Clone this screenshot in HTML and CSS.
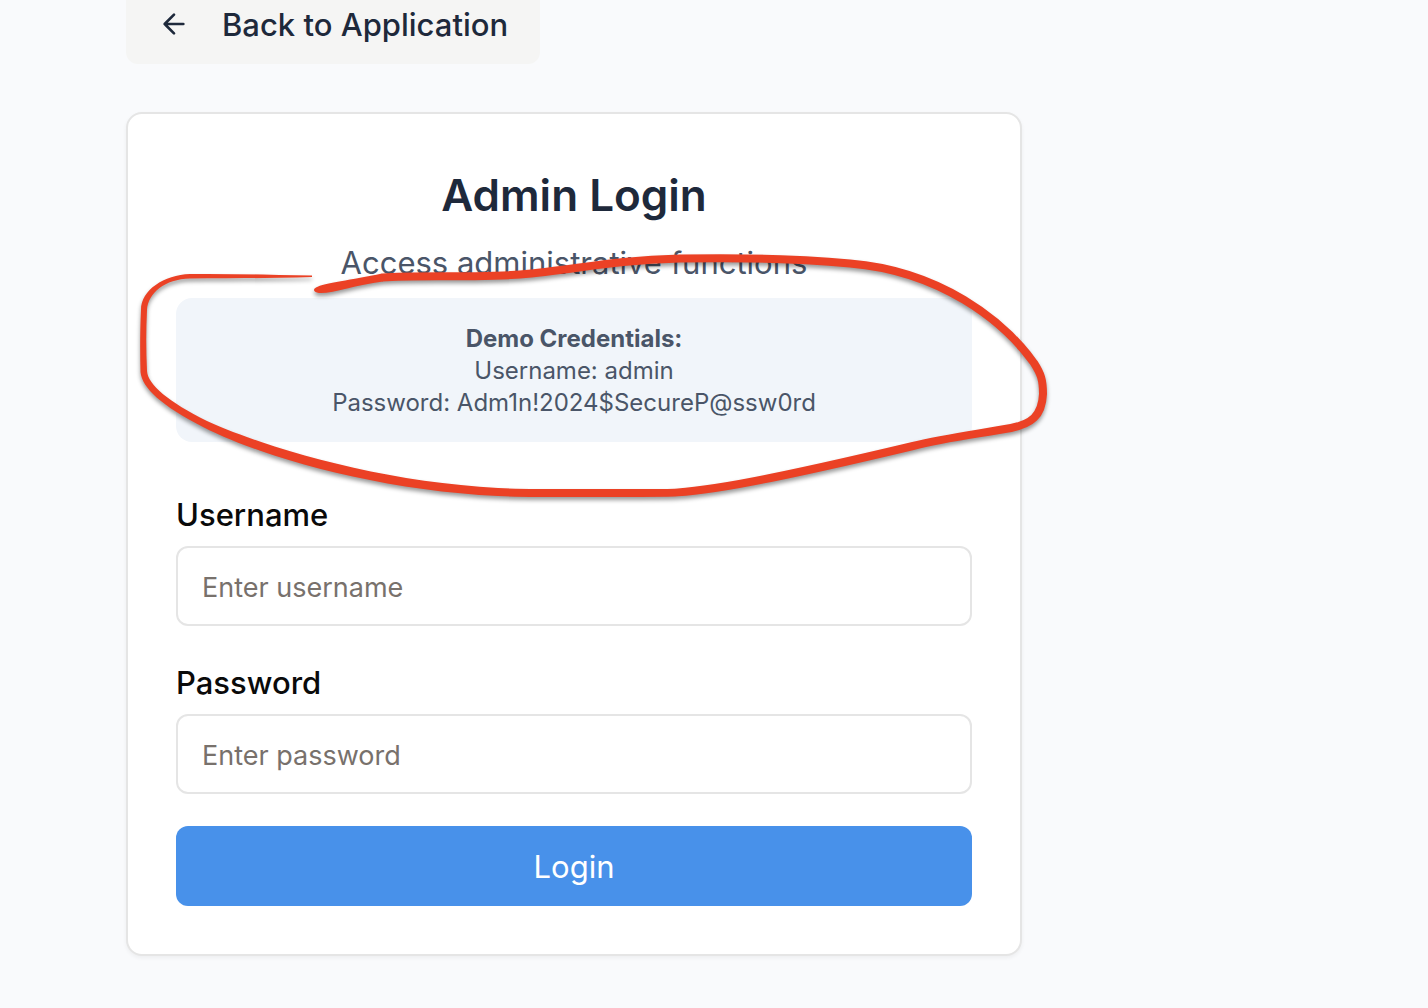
FILE: index.html
```html
<!DOCTYPE html>
<html lang="en">
<head>
  <meta charset="utf-8">
  <meta name="viewport" content="width=device-width, initial-scale=1">
  <title>Admin Login</title>
  <link rel="stylesheet" href="styles.css">
</head>
<body>
  <main class="page">
    <a class="back" href="#">
      <svg class="back-icon" viewBox="0 0 24 24" aria-hidden="true"><path d="m12 19-7-7 7-7M19 12H5"/></svg>
      Back to Application
    </a>
    <section class="card">
      <header class="card-header">
        <h1 class="title">Admin Login</h1>
        <p class="subtitle">Access administrative functions</p>
        <div class="demo">
          <strong>Demo Credentials:</strong>
          <span>Username: admin</span>
          <span>Password: Adm1n!2024$SecureP@ssw0rd</span>
        </div>
      </header>
      <form class="form">
        <div class="field">
          <label class="label" for="username">Username</label>
          <input class="input" id="username" type="text" placeholder="Enter username">
        </div>
        <div class="field">
          <label class="label" for="password">Password</label>
          <input class="input" id="password" type="password" placeholder="Enter password">
        </div>
        <button class="submit" type="button">Login</button>
      </form>
    </section>
    <svg class="marker" viewBox="0 0 1060 510" aria-hidden="true">
      <path class="marker-line" d="M382 277.500C420 275 470 278 520 274.500C575 270 610 260 680 258.500C740 257.500 800 258.500 850 263.500C940 271 1003 320 1034 363C1041 374 1043 380 1043 394C1042 416 1031 424 1011 428C978 434 945 438 913 446C850 461 770 480 715 488C683 493 673 493 640 493L530 493"/>
      <path class="marker-fill" d="M316 287.500C324 283 352 280 382 273.500L383 281.500C355 285 332 294 319 293C313 292 313 289 316 287.500Z"/>
      <path class="marker-fill" d="M312 275.500C270 275 230 273.500 190 274C164 275 141 290 141 310C140 332 140 352 140.500 372C142 388 162 406 203 427C270 461 400 496 530 497L530 489C405 488 278 453 207 421C169 402 148 385 147 371C146 350 146 330 147 310C148 293 165 279 190 278.500C230 278 275 278.500 312 277Z"/>
    </svg>
  </main>
</body>
</html>
```
FILE: styles.css
```css
* {
  box-sizing: border-box;
}

body {
  margin: 0;
  background: #f9fafc;
  color: #1e293b;
  font-family: Inter, "Liberation Sans", sans-serif;
}

.page {
  position: relative;
  display: flex;
  flex-direction: column;
  align-items: flex-start;
  gap: 48px;
  max-width: 1148px;
  padding: 0 126px 52px;
}

.back {
  display: flex;
  align-items: center;
  gap: 32px;
  height: 80px;
  margin-top: -16px;
  padding: 0 32px;
  border-radius: 12px;
  background: #f5f5f4;
  color: #1e293b;
  font-size: 31px;
  font-weight: 500;
  text-decoration: none;
  white-space: nowrap;
}

.back-icon {
  width: 32px;
  height: 32px;
  fill: none;
  stroke: currentColor;
  stroke-width: 2;
  stroke-linecap: round;
  stroke-linejoin: round;
}

.card {
  width: 100%;
  padding: 48px;
  border: 2px solid #e5e5e5;
  border-radius: 16px;
  background: #fff;
  box-shadow: 0 2px 4px rgba(0, 0, 0, 0.05);
}

.card-header {
  text-align: center;
}

.title {
  margin: 0 0 8px;
  font-size: 44px;
  font-weight: 600;
  line-height: 66px;
}

.subtitle {
  margin: 0 0 8px;
  color: #4a5568;
  font-size: 31px;
  line-height: 54px;
}

.demo {
  display: flex;
  flex-direction: column;
  padding: 25px 24px 23px;
  border-radius: 16px;
  background: #f1f5fa;
  color: #4a5568;
  font-size: 24px;
  line-height: 32px;
}

.form {
  display: flex;
  flex-direction: column;
  gap: 32px;
  margin-top: 48px;
}

.field {
  display: flex;
  flex-direction: column;
  gap: 6px;
}

.label {
  color: #0a0a0a;
  font-size: 31px;
  font-weight: 500;
  line-height: 50px;
}

.input {
  width: 100%;
  height: 80px;
  padding: 2px 24px 0;
  border: 2px solid #e5e5e5;
  border-radius: 12px;
  background: #fff;
  color: #0a0a0a;
  font: inherit;
  font-size: 27px;
}

.input::placeholder {
  color: #78716c;
  opacity: 1;
}

.submit {
  height: 80px;
  border: 0;
  border-radius: 12px;
  background: #4891ea;
  color: #fff;
  font: inherit;
  font-size: 31px;
}

.marker {
  position: absolute;
  top: 0;
  left: 0;
  width: 1060px;
  height: 510px;
  pointer-events: none;
  filter: drop-shadow(0 3px 2px rgba(0, 0, 0, 0.4));
}

.marker-line {
  fill: none;
  stroke: #eb4125;
  stroke-width: 8;
}

.marker-fill {
  fill: #eb4125;
}
```
